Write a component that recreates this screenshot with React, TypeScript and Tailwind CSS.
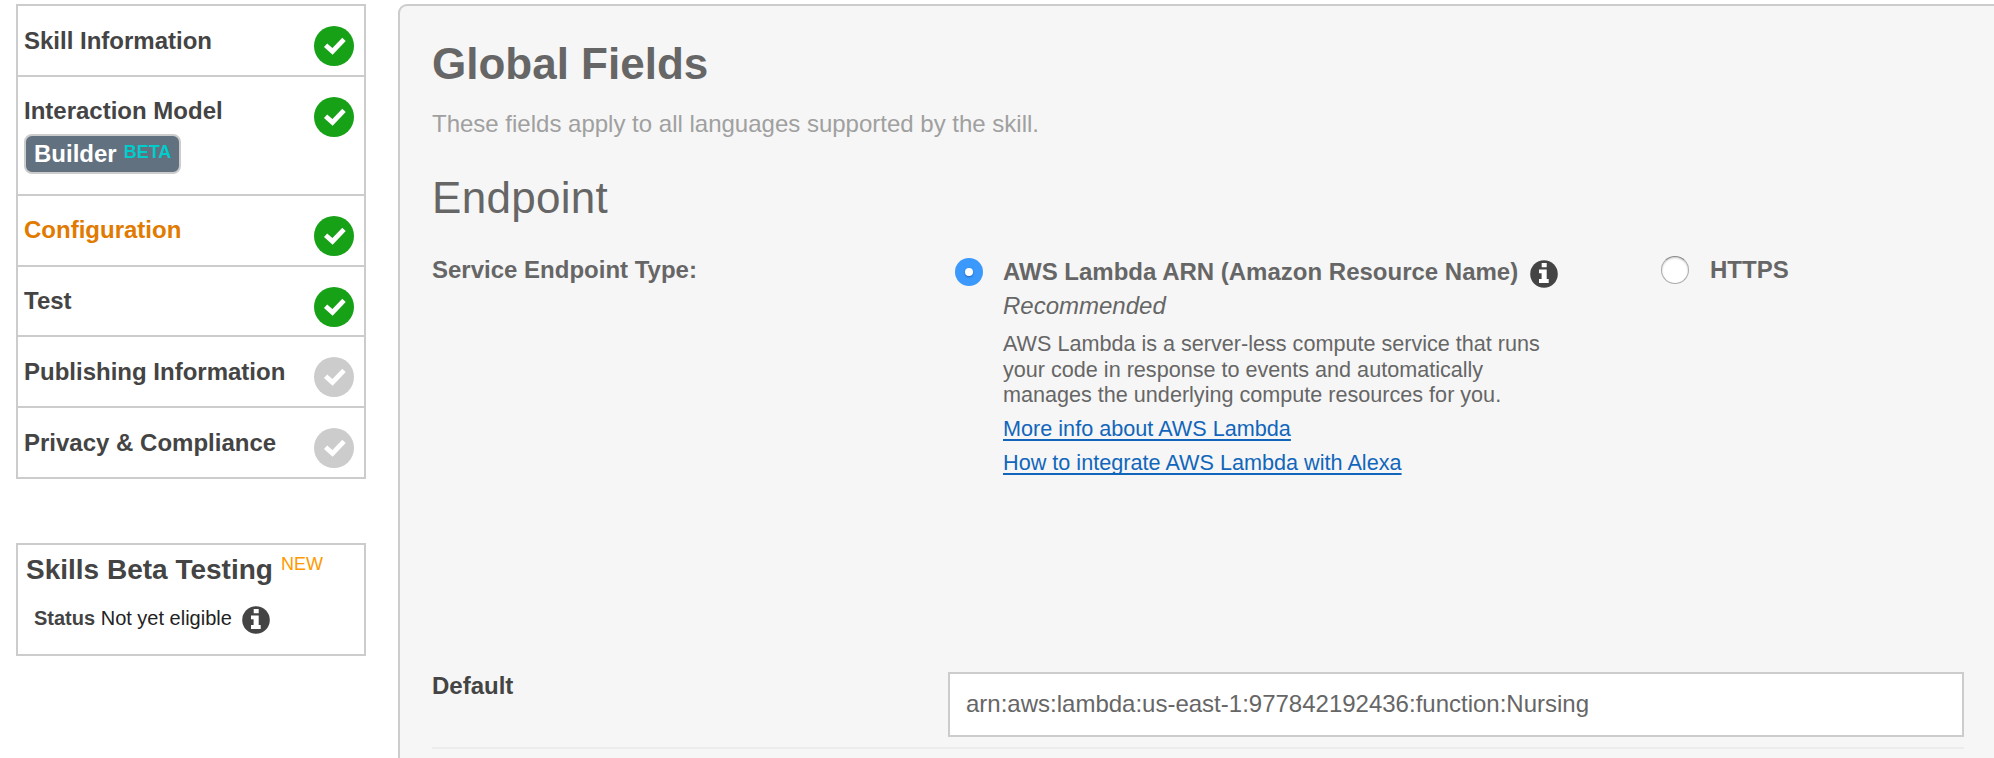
import React from "react";

const steps = [
  { label: "Skill Information", done: true, height: "h-[71px]", pad: "pt-[21px]" },
  { label: "Interaction Model", done: true, builder: true, height: "h-[119px]", pad: "pt-[20px]" },
  { label: "Configuration", done: true, active: true, height: "h-[71px]", pad: "pt-[20px]" },
  { label: "Test", done: true, height: "h-[70px]", pad: "pt-[20px]" },
  { label: "Publishing Information", done: false, height: "h-[71px]", pad: "pt-[21px]" },
  { label: "Privacy & Compliance", done: false, height: "h-[71px]", pad: "pt-[21px]" },
];

function CheckBadge({ done }: { done: boolean }) {
  return (
    <svg viewBox="0 0 40 40" className="mt-[20px] mr-[10px] h-[40px] w-[40px] shrink-0">
      <circle cx="20" cy="20" r="20" fill={done ? "#17a117" : "#cccccc"} />
      <path d="M11.6 19.2 L18.5 25.4 L30 13.4" fill="none" stroke="#fff" strokeWidth="4.8" />
    </svg>
  );
}

function InfoIcon({ className }: { className: string }) {
  return (
    <svg viewBox="0 0 28 28" className={`h-[28px] w-[28px] shrink-0 ${className}`}>
      <circle cx="14" cy="14" r="13.8" fill="#444" />
      <path d="M11.7 3.1h5v4.2h-5zM9 9.4h7.7v9.7h2v3.8H9v-3.8h2.6v-5.8H9z" fill="#fff" />
    </svg>
  );
}

function Sidebar() {
  return (
    <aside className="w-[350px] shrink-0">
      <nav className="border-2 border-b-0 border-[#ccc]">
        {steps.map((s) => (
          <div key={s.label} className={`flex justify-between border-b-2 border-[#ccc] pl-[6px] ${s.height}`}>
            <div className={s.pad}>
              <div className={`text-[24px] leading-[28px] font-bold whitespace-nowrap ${s.active ? "text-[#e17a00]" : "text-[#444]"}`}>
                {s.label}
              </div>
              {s.builder && (
                <div className="mt-[9px] flex h-[40px] w-[157px] gap-[7px] rounded-[8px] border-2 border-[#ccc] bg-[#62717f] pl-[8px] font-bold">
                  <span className="pt-[4px] text-[24px] leading-[28px] text-white">Builder</span>
                  <span className="pt-[6px] text-[18px] leading-[20px] text-[#0cc]">BETA</span>
                </div>
              )}
            </div>
            <CheckBadge done={s.done} />
          </div>
        ))}
      </nav>
      <section className="mt-[64px] h-[113px] border-2 border-[#ccc] pl-[8px] text-[#444]">
        <div className="flex gap-[8px]">
          <h2 className="pt-[8px] text-[28px] leading-[34px] font-bold whitespace-nowrap">Skills Beta Testing</h2>
          <span className="pt-[8px] text-[18px] leading-[22px] text-[#ff9900]">NEW</span>
        </div>
        <div className="mt-[17px] flex pl-[8px]">
          <div className="text-[20px] leading-[28px] whitespace-nowrap text-[#222]">
            <b className="text-[#444]">Status</b> Not yet eligible
          </div>
          <InfoIcon className="mt-[2px] ml-[10px]" />
        </div>
      </section>
    </aside>
  );
}

export default function App() {
  return (
    <div className="flex h-[758px] w-[1994px] gap-[32px] overflow-hidden bg-white pt-[4px] pl-[16px] font-['Liberation_Sans',Arial,sans-serif]">
      <Sidebar />
      <main className="h-[800px] w-[1640px] shrink-0 rounded-tl-[9px] border-2 border-[#ccc] bg-[#f6f6f6] pl-[32px] text-[#666]">
        <h1 className="pt-[33px] text-[44px] leading-[50px] font-bold">Global Fields</h1>
        <p className="mt-[21px] text-[24px] leading-[28px] text-[#a0a0a0]">
          These fields apply to all languages supported by the skill.
        </p>
        <h2 className="mt-[35px] text-[44px] leading-[50px] tracking-[0.3px]">Endpoint</h2>
        <div className="mt-[32px] flex h-[417px]">
          <div className="w-[523px] pt-[1px] text-[24px] leading-[28px] font-bold">Service Endpoint Type:</div>
          <div className="flex w-[706px]">
            <div className="mt-[3px] mr-[20px] flex h-[28px] w-[28px] shrink-0 items-center justify-center rounded-full bg-[#3b99fc]">
              <div className="h-[8px] w-[8px] rounded-full bg-white shadow-[0_1px_2px_#1d62b8]" />
            </div>
            <div className="whitespace-nowrap">
              <div className="flex pt-[3px]">
                <span className="text-[24px] leading-[28px] font-bold">AWS Lambda ARN (Amazon Resource Name)</span>
                <InfoIcon className="mt-[2px] ml-[12px]" />
              </div>
              <div className="mt-[4px] text-[24px] leading-[28px] italic">Recommended</div>
              <div className="mt-[11px] text-[21.6px] leading-[25.5px]">
                AWS Lambda is a server-less compute service that runs
                <br />
                your code in response to events and automatically
                <br />
                manages the underlying compute resources for you.
              </div>
              <div className="mt-[8px] flex flex-col items-start gap-[8px] text-[21.65px] leading-[26px] text-[#1166bb]">
                <a className="underline decoration-2 underline-offset-[3px]">More info about AWS Lambda</a>
                <a className="underline decoration-2 underline-offset-[3px] [text-decoration-skip-ink:none]">
                  How to integrate AWS Lambda with Alexa
                </a>
              </div>
            </div>
          </div>
          <div className="flex gap-[21px]">
            <div className="mt-[1px] h-[28px] w-[28px] rounded-full border border-[#aaa] border-t-[#888] bg-white shadow-[inset_0_1px_2px_#ccc]" />
            <div className="pt-[1px] text-[24px] leading-[28px] font-bold">HTTPS</div>
          </div>
        </div>
        <div className="flex h-[77px] w-[1532px] border-b-2 border-[#ececec]">
          <div className="w-[516px] text-[24px] leading-[28px] font-bold text-[#444]">Default</div>
          <div className="h-[65px] w-[1016px] border-2 border-[#ccc] bg-white pt-[16px] pl-[16px] text-[24px] leading-[28px]">
            arn:aws:lambda:us-east-1:977842192436:function:Nursing
          </div>
        </div>
      </main>
    </div>
  );
}
